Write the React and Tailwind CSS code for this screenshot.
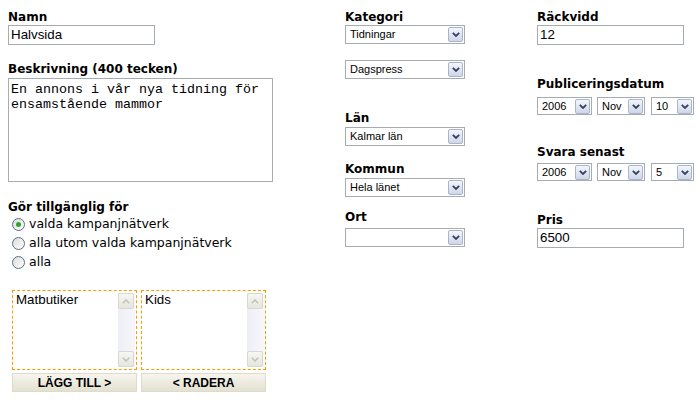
import React from "react";

const lbl = "font-['DejaVu_Sans',sans-serif] font-bold text-[12px] leading-[15px] text-black whitespace-nowrap";
const inputText = "font-['Liberation_Sans',Arial,sans-serif] text-[13.33px] text-black";
const selText = "font-['Liberation_Sans',Arial,sans-serif] text-[11px] text-black";

function Chevron() {
  return (
    <svg width="8" height="5" viewBox="0 0 8 5">
      <path d="M0.8 0.8 L4 4 L7.2 0.8" stroke="#34415f" strokeWidth="1.8" fill="none" />
    </svg>
  );
}

function DropBtn() {
  return (
    <div className="w-[15px] h-[15px] shrink-0 flex items-center justify-center rounded-[2px] border border-[#aab5cc] bg-gradient-to-b from-[#f4f6fc] to-[#cfd6e8]">
      <Chevron />
    </div>
  );
}

function Select({ value, className }) {
  return (
    <div className={"flex items-center justify-between bg-white border border-[#a5acb2] pl-[4px] pr-[1px] " + className}>
      <span className={selText}>{value}</span>
      <DropBtn />
    </div>
  );
}

function Input({ value, className }) {
  return (
    <div className={"flex items-center bg-white border border-[#a5acb2] pl-[2px] " + className}>
      <span className={inputText}>{value}</span>
    </div>
  );
}

function Radio({ checked, label }) {
  return (
    <div className="flex items-center h-[19px] pl-[4px]">
      <div className="w-[13px] h-[13px] rounded-full border border-[#5a6f8c] bg-gradient-to-br from-[#dcdcd6] to-white flex items-center justify-center shrink-0">
        {checked && <div className="w-[5px] h-[5px] rounded-full bg-[#2fa52f]" />}
      </div>
      <span className="ml-[4px] font-['DejaVu_Sans',sans-serif] text-[12.5px] text-black whitespace-nowrap">{label}</span>
    </div>
  );
}

function ScrollArrow({ up }) {
  return (
    <div className="w-[16px] h-[16px] rounded-[2px] border border-[#d8d8d0] bg-gradient-to-b from-[#f7f7f3] to-[#e6e6de] flex items-center justify-center">
      <svg width="8" height="5" viewBox="0 0 8 5">
        <path d={up ? "M0.8 4.2 L4 1 L7.2 4.2" : "M0.8 0.8 L4 4 L7.2 0.8"} stroke="#c3c3bd" strokeWidth="1.6" fill="none" />
      </svg>
    </div>
  );
}

function ListBox({ item }) {
  return (
    <div className="w-[125px] h-[80px] border border-dashed border-[#ff9900] bg-white flex">
      <div className={"flex-1 pl-[3px] pt-[1px] leading-[16px] " + inputText}>{item}</div>
      <div className="w-[17px] mr-[1px] my-[2px] flex flex-col justify-between bg-gradient-to-r from-[#eeeef6] to-[#f6f6fb]">
        <ScrollArrow up />
        <ScrollArrow />
      </div>
    </div>
  );
}

function Btn({ label }) {
  return (
    <div className="w-[125px] h-[19px] flex items-center justify-center border border-[#dedbcc] bg-gradient-to-b from-[#f6f5ee] to-[#e4e1d1] font-['Liberation_Sans',Arial,sans-serif] font-bold text-[12px] text-black">
      {label}
    </div>
  );
}

export default function App() {
  return (
    <div className="w-[700px] h-[404px] bg-white flex pl-[8px] pt-[10px] overflow-hidden">
      {/* Column 1 */}
      <div className="w-[337px] flex flex-col shrink-0">
        <div className={lbl}>Namn</div>
        <Input value="Halvsida" className="w-[147px] h-[20px]" />
        <div className={lbl + " mt-[17px]"}>Beskrivning (400 tecken)</div>
        <div className="mt-[1px] w-[265px] h-[104px] border border-[#a5acb2] pl-[2px] pt-[3px] font-['Liberation_Mono','Courier_New',monospace] text-[13.33px] leading-[15px] text-black">
          En annons i vår nya tidning för
          <br />
          ensamstående mammor
        </div>
        <div className={lbl + " mt-[18px]"}>Gör tillgänglig för</div>
        <Radio checked label="valda kampanjnätverk" />
        <Radio label="alla utom valda kampanjnätverk" />
        <Radio label="alla" />
        <div className="mt-[18px] ml-[4px] flex gap-[4px]">
          <ListBox item="Matbutiker" />
          <ListBox item="Kids" />
        </div>
        <div className="mt-[3px] ml-[4px] flex gap-[4px]">
          <Btn label="LÄGG TILL >" />
          <Btn label="< RADERA" />
        </div>
      </div>

      {/* Column 2 */}
      <div className="w-[192px] flex flex-col shrink-0">
        <div className={lbl}>Kategori</div>
        <Select value="Tidningar" className="w-[120px] h-[19px]" />
        <Select value="Dagspress" className="w-[120px] h-[19px] mt-[16px]" />
        <div className={lbl + " mt-[32px]"}>Län</div>
        <Select value="Kalmar län" className="w-[120px] h-[19px] mt-[1px]" />
        <div className={lbl + " mt-[16px]"}>Kommun</div>
        <Select value="Hela länet" className="w-[120px] h-[19px] mt-[1px]" />
        <div className={lbl + " mt-[13px]"}>Ort</div>
        <Select value="" className="w-[120px] h-[19px] mt-[3px]" />
      </div>

      {/* Column 3 */}
      <div className="flex flex-col">
        <div className={lbl}>Räckvidd</div>
        <Input value="12" className="w-[147px] h-[20px]" />
        <div className={lbl + " mt-[32px]"}>Publiceringsdatum</div>
        <div className="mt-[5px] flex">
          <Select value="2006" className="w-[55px] h-[18px]" />
          <Select value="Nov" className="w-[48px] h-[18px] ml-[5px]" />
          <Select value="10" className="w-[43px] h-[18px] ml-[6px]" />
        </div>
        <div className={lbl + " mt-[30px]"}>Svara senast</div>
        <div className="mt-[3px] flex">
          <Select value="2006" className="w-[55px] h-[18px]" />
          <Select value="Nov" className="w-[48px] h-[18px] ml-[5px]" />
          <Select value="5" className="w-[43px] h-[18px] ml-[6px]" />
        </div>
        <div className={lbl + " mt-[32px]"}>Pris</div>
        <Input value="6500" className="w-[147px] h-[20px]" />
      </div>
    </div>
  );
}
